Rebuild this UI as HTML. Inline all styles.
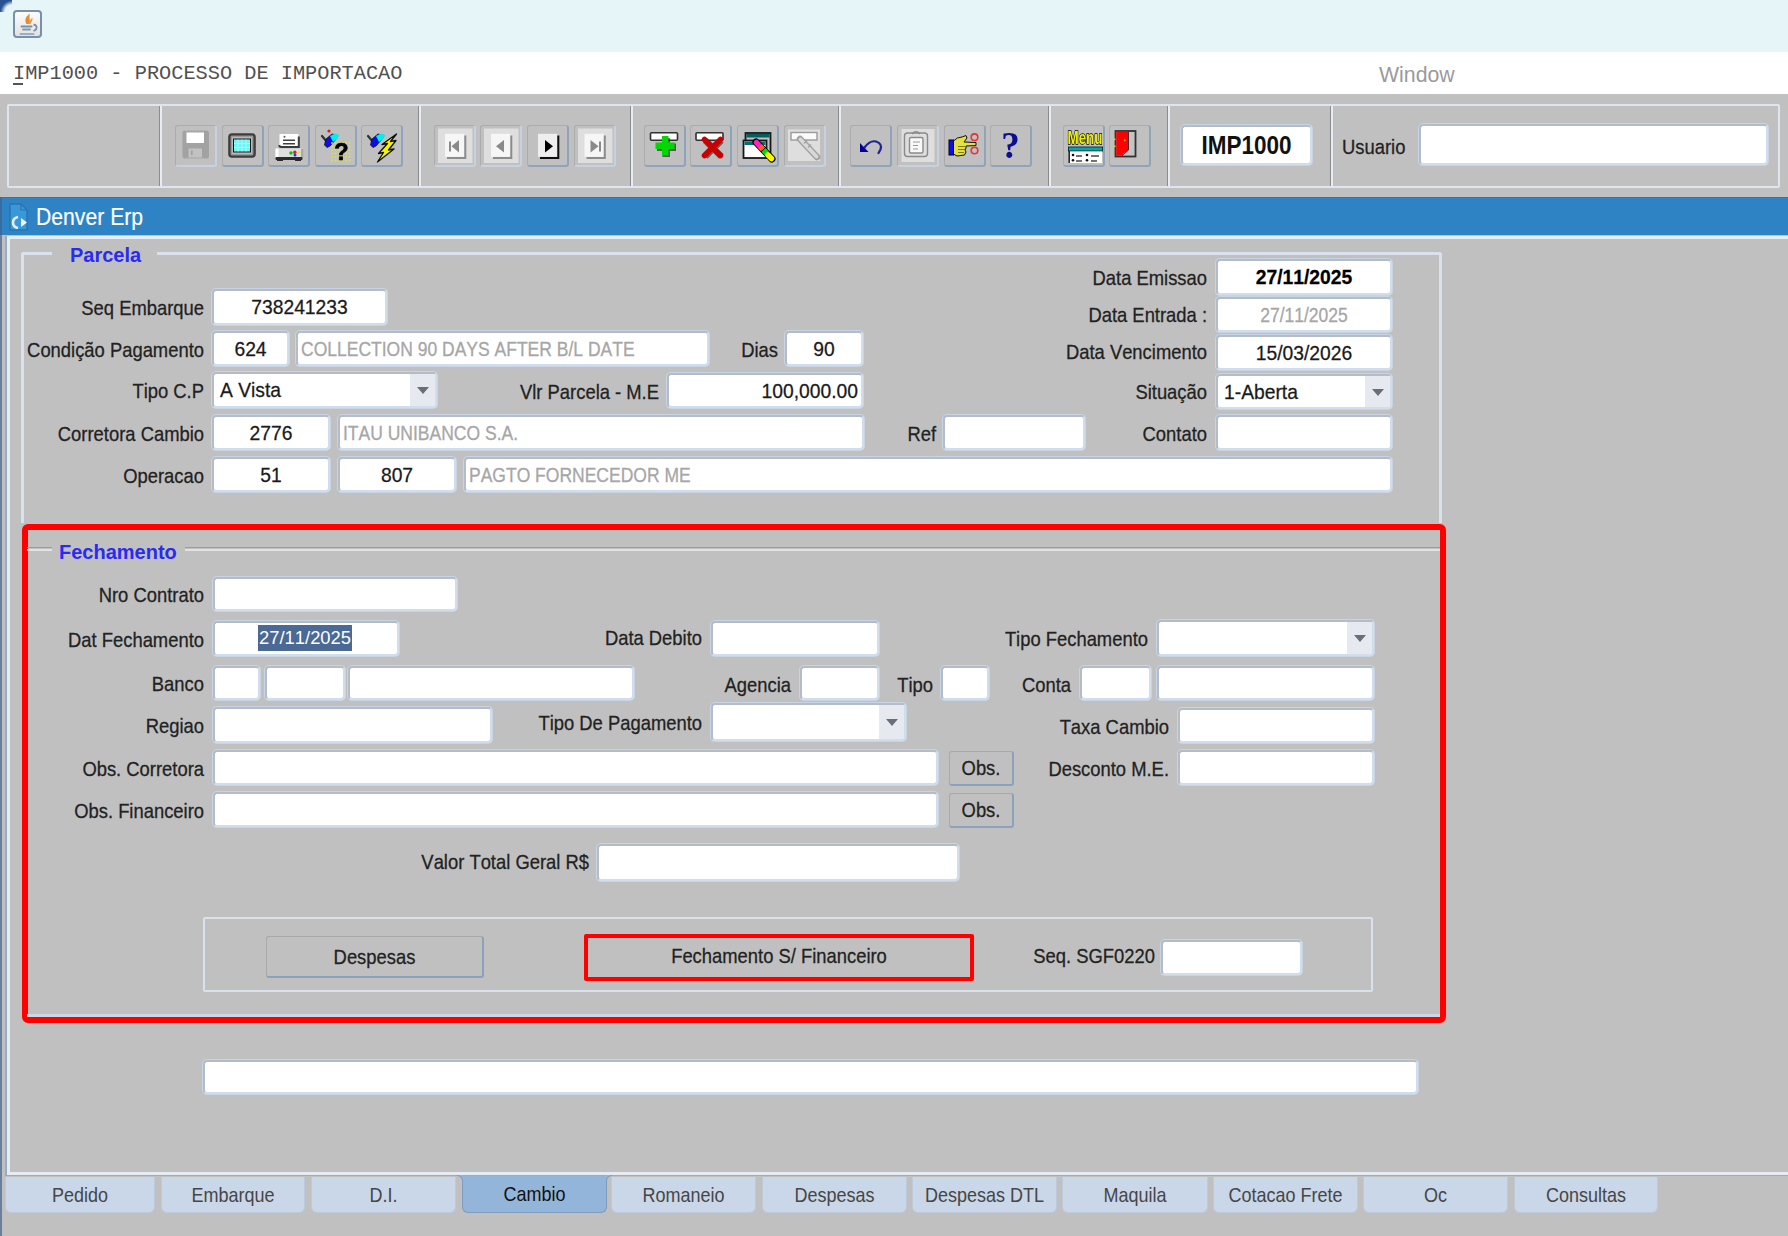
<!DOCTYPE html><html><head><meta charset="utf-8"><style>
*{box-sizing:border-box;margin:0;padding:0}
html,body{width:1788px;height:1236px;overflow:hidden;background:#c0c0c0;font-family:"Liberation Sans",sans-serif;position:relative}
.a{position:absolute}
.f{position:absolute;background:#fff;border:2px solid;border-color:#b3bcc8 #d2ddec #d2ddec #b3bcc8;border-radius:4px;box-shadow:0 0 0 1px #c8d4e4;font-size:19.3px;font-kerning:none;color:#1a1a1a;white-space:nowrap;overflow:hidden}
.f.g{color:#a6a6a6;font-size:17.5px}
.f.g .t{transform:translateY(1.2px) scaleY(1.12)}
.f.b{font-weight:bold;color:#000}
.cb{position:absolute;right:0;top:0;bottom:0;background:#e6eaf0}
.cb i{position:absolute;left:50%;top:50%;margin-left:-6px;margin-top:-3px;border-left:6px solid transparent;border-right:6px solid transparent;border-top:7px solid #6a6e78}
.l{position:absolute;font-size:18.4px;color:#222;white-space:nowrap}
.t{display:inline-block;transform:translateY(1.8px) scaleY(1.09);-webkit-text-stroke:0.25px currentColor;font-kerning:none}
.f .t{transform:translateY(0.5px) scaleY(1.05)}
.gt{position:absolute;font-size:20px;font-weight:bold;color:#2a2af5;white-space:nowrap}
.btn{position:absolute;border:1px solid #a9a9a9;border-right:2px solid #8aa2bc;border-bottom:2px solid #8aa2bc;border-radius:3px;text-align:center;font-size:18.4px;color:#222}
.tb{position:absolute;top:125px;height:42px;border:1px solid #acacac;border-right:2px solid #8ea4bc;border-bottom:2px solid #8ea4bc;border-radius:3px}
.tb.d{border-right-color:#c4d2e2;border-bottom-color:#c4d2e2}
.tab{position:absolute;top:1177px;height:36px;background:#c9d7e8;border-radius:0 0 6px 6px;border:1px solid #bccadc;border-top:none;text-align:center;font-size:18px;line-height:34px;color:#464646}
.tab .t{-webkit-text-stroke:0}
.tab.s{background:#93b5d9;border-color:#7e9cc0;color:#111;top:1176px;height:37px;line-height:35px}
</style></head><body><div style="position:absolute;left:0px;top:0px;width:1788px;height:52px;background:#e6f5f7"></div>
<div style="position:absolute;left:0px;top:52px;width:1788px;height:42px;background:#fff"></div>
<div style="position:absolute;left:0px;top:0px;width:12px;height:12px;background:radial-gradient(circle at 12px 12px,#e6f5f7 7px,#2a5290 11.5px)"></div>
<div class="a" style="left:13px;top:58px;font-family:'Liberation Mono',monospace;font-size:20.3px;line-height:32px;color:#505050;white-space:nowrap">IMP1000 - PROCESSO DE IMPORTACAO</div>
<div style="position:absolute;left:13px;top:83px;width:10px;height:2px;background:#555"></div>
<div class="a" style="left:1379px;top:59px;font-size:21.3px;line-height:32px;color:#9a9a9a">Window</div>
<div class="a" style="left:13px;top:10px;width:29px;height:28px;border:2px solid #7a90a8;border-radius:4px;background:linear-gradient(#fcfcfc,#e2e2e2)"></div>
<svg class="a" style="left:0;top:0" width="60" height="50" viewBox="0 0 60 50"><g filter="url(#bj)"><path d="M26.5 24 C24 20 26 16 30 13.5 C28.5 17 31 19 29 24 Z" fill="#e88a30"/><path d="M29 24 C28 21 31 19.5 32.5 17.5 C33 20.5 31 22 30.5 24 Z" fill="#f09a40"/><rect x="20.5" y="25.5" width="12" height="2" rx="1" fill="#7890a8"/><rect x="22" y="28.5" width="9" height="2" rx="1" fill="#8098b0"/><path d="M33.5 24.5 Q38 25.5 36 29.5 L33.5 31" fill="none" stroke="#7890a8" stroke-width="1.8"/><rect x="19.5" y="33" width="15" height="2" rx="1" fill="#98aec4"/></g><defs><filter id="bj"><feGaussianBlur stdDeviation="0.4"/></filter></defs></svg>
<div style="position:absolute;left:7px;top:104px;width:1773px;height:84px;border:2px solid #dde6f0;border-radius:2px"></div>
<div style="position:absolute;left:159px;top:106px;width:1px;height:80px;background:#8c8c8c"></div>
<div style="position:absolute;left:160px;top:106px;width:2px;height:80px;background:#e6ecf2"></div>
<div style="position:absolute;left:418px;top:106px;width:1px;height:80px;background:#8c8c8c"></div>
<div style="position:absolute;left:419px;top:106px;width:2px;height:80px;background:#e6ecf2"></div>
<div style="position:absolute;left:630px;top:106px;width:1px;height:80px;background:#8c8c8c"></div>
<div style="position:absolute;left:631px;top:106px;width:2px;height:80px;background:#e6ecf2"></div>
<div style="position:absolute;left:838px;top:106px;width:1px;height:80px;background:#8c8c8c"></div>
<div style="position:absolute;left:839px;top:106px;width:2px;height:80px;background:#e6ecf2"></div>
<div style="position:absolute;left:1048px;top:106px;width:1px;height:80px;background:#8c8c8c"></div>
<div style="position:absolute;left:1049px;top:106px;width:2px;height:80px;background:#e6ecf2"></div>
<div style="position:absolute;left:1167px;top:106px;width:1px;height:80px;background:#8c8c8c"></div>
<div style="position:absolute;left:1168px;top:106px;width:2px;height:80px;background:#e6ecf2"></div>
<div style="position:absolute;left:1330px;top:106px;width:1px;height:80px;background:#8c8c8c"></div>
<div style="position:absolute;left:1331px;top:106px;width:2px;height:80px;background:#e6ecf2"></div>
<div class="tb d" style="left:175px;width:42px"></div>
<div class="tb" style="left:222px;width:42px"></div>
<div class="tb" style="left:268px;width:42px"></div>
<div class="tb" style="left:315px;width:42px"></div>
<div class="tb" style="left:361px;width:42px"></div>
<div class="tb d" style="left:434px;width:42px"></div>
<div class="tb d" style="left:480px;width:42px"></div>
<div class="tb" style="left:527px;width:42px"></div>
<div class="tb d" style="left:574px;width:42px"></div>
<div class="tb" style="left:644px;width:42px"></div>
<div class="tb" style="left:690px;width:42px"></div>
<div class="tb" style="left:737px;width:42px"></div>
<div class="tb d" style="left:784px;width:42px"></div>
<div class="tb" style="left:850px;width:42px"></div>
<div class="tb d" style="left:897px;width:42px"></div>
<div class="tb" style="left:944px;width:42px"></div>
<div class="tb" style="left:990px;width:42px"></div>
<div class="tb" style="left:1063px;width:42px"></div>
<div class="tb" style="left:1109px;width:42px"></div>
<svg class="a" style="left:0;top:0" width="1788" height="200" viewBox="0 0 1788 200"><g filter="url(#bl)"><rect x="438" y="128.5" width="34.5" height="34.5" fill="#dedede"/><rect x="484" y="128.5" width="34.5" height="34.5" fill="#dedede"/><rect x="578" y="128.5" width="34.5" height="34.5" fill="#dedede"/><rect x="788" y="129.5" width="32" height="31.5" fill="#dedede"/><rect x="901.5" y="129" width="33.0" height="33" fill="#dedede"/><rect x="182.5" y="130.5" width="26.5" height="28" rx="2.5" fill="#a2a2a2"/><rect x="186.5" y="132.5" width="17.5" height="10.5" fill="#fff"/><rect x="188.5" y="148.5" width="13.5" height="9" fill="#c2c2c2"/><rect x="191" y="150.5" width="1.6" height="4.5" fill="#a0a0a0"/><path d="M186 131 h18 M186 158.3 h18" stroke="#c0c0c0" stroke-width="0.8" stroke-dasharray="1.6 1.6"/><rect x="229.5" y="134.5" width="25" height="22" rx="2.5" fill="none" stroke="#3c3c3c" stroke-width="2.6"/><rect x="231.5" y="136.5" width="21" height="18" fill="none" stroke="#9a9a9a" stroke-width="1.4"/><rect x="233" y="138.5" width="18" height="14" fill="#101818"/><rect x="234" y="139.5" width="16" height="12" fill="#70f4f4"/><path d="M234 143.5h16M234 147.5h16M238 139.5v12M242 139.5v12M246 139.5v12" stroke="#b8fcfc" stroke-width="0.8"/><rect x="279.5" y="134" width="19" height="12.5" fill="#fff"/><path d="M298.8 136.5 v10.5 h-17.5 a2 2 0 0 1 -2 -2" fill="none" stroke="#3a3a3a" stroke-width="2"/><path d="M283 140.3h12M283 143.8h12" stroke="#404040" stroke-width="1.5"/><circle cx="284.5" cy="136.8" r="1" fill="#555"/><rect x="275.5" y="148.5" width="28" height="9" rx="1.5" fill="#dedede"/><rect x="275.5" y="148.5" width="3" height="9" fill="#fff"/><rect x="301" y="149" width="2.5" height="8.5" fill="#a8a8a8"/><circle cx="291" cy="153" r="1.8" fill="#10c010"/><circle cx="294.8" cy="152.3" r="1.7" fill="#e02020"/><circle cx="295" cy="155" r="1.5" fill="#3030e0"/><circle cx="299" cy="152.5" r="1.6" fill="#e8e840"/><rect x="275.5" y="157" width="27" height="3" rx="1" fill="#2c2c2c"/><rect x="277" y="159" width="6" height="2" fill="#2c2c2c"/><rect x="295" y="159" width="6" height="2" fill="#2c2c2c"/><g transform="translate(0,0)"><path d="M322 136 L327 142" stroke="#303030" stroke-width="2.2" stroke-linecap="round"/><path d="M326 139 L332 134 L338 135.5 L337 138 L330 146 L327 147.5 L324.5 145 Z" fill="#1010e8" stroke="#101010" stroke-width="0.8"/><path d="M330 136 L335 133.5 L339 135 L337.5 138.5 L333 142 Z" fill="#00f0f0"/></g><circle cx="329" cy="131" r="1.6" fill="#d02020"/><circle cx="332" cy="143" r="0.9" fill="#e0e040"/><circle cx="335.5" cy="143" r="0.9" fill="#e0e040"/><circle cx="339" cy="143" r="0.9" fill="#e0e040"/><circle cx="342.5" cy="143" r="0.9" fill="#e0e040"/><circle cx="346" cy="143" r="0.9" fill="#e0e040"/><circle cx="349.5" cy="143" r="0.9" fill="#e0e040"/><circle cx="332" cy="146.5" r="0.9" fill="#e0e040"/><circle cx="335.5" cy="146.5" r="0.9" fill="#e0e040"/><circle cx="339" cy="146.5" r="0.9" fill="#e0e040"/><circle cx="342.5" cy="146.5" r="0.9" fill="#e0e040"/><circle cx="346" cy="146.5" r="0.9" fill="#e0e040"/><circle cx="349.5" cy="146.5" r="0.9" fill="#e0e040"/><circle cx="332" cy="150" r="0.9" fill="#e0e040"/><circle cx="335.5" cy="150" r="0.9" fill="#e0e040"/><circle cx="339" cy="150" r="0.9" fill="#e0e040"/><circle cx="342.5" cy="150" r="0.9" fill="#e0e040"/><circle cx="346" cy="150" r="0.9" fill="#e0e040"/><circle cx="349.5" cy="150" r="0.9" fill="#e0e040"/><circle cx="332" cy="153.5" r="0.9" fill="#e0e040"/><circle cx="335.5" cy="153.5" r="0.9" fill="#e0e040"/><circle cx="339" cy="153.5" r="0.9" fill="#e0e040"/><circle cx="342.5" cy="153.5" r="0.9" fill="#e0e040"/><circle cx="346" cy="153.5" r="0.9" fill="#e0e040"/><circle cx="349.5" cy="153.5" r="0.9" fill="#e0e040"/><circle cx="332" cy="157" r="0.9" fill="#e0e040"/><circle cx="335.5" cy="157" r="0.9" fill="#e0e040"/><circle cx="339" cy="157" r="0.9" fill="#e0e040"/><circle cx="342.5" cy="157" r="0.9" fill="#e0e040"/><circle cx="346" cy="157" r="0.9" fill="#e0e040"/><circle cx="349.5" cy="157" r="0.9" fill="#e0e040"/><circle cx="332" cy="160.5" r="0.9" fill="#e0e040"/><circle cx="335.5" cy="160.5" r="0.9" fill="#e0e040"/><circle cx="339" cy="160.5" r="0.9" fill="#e0e040"/><circle cx="342.5" cy="160.5" r="0.9" fill="#e0e040"/><circle cx="346" cy="160.5" r="0.9" fill="#e0e040"/><circle cx="349.5" cy="160.5" r="0.9" fill="#e0e040"/><text x="341.5" y="160" font-family="Liberation Sans" font-weight="bold" font-size="23.5" fill="#000" stroke="#000" stroke-width="0.7" text-anchor="middle">?</text><g transform="translate(46,0)"><path d="M322 136 L327 142" stroke="#303030" stroke-width="2.2" stroke-linecap="round"/><path d="M326 139 L332 134 L338 135.5 L337 138 L330 146 L327 147.5 L324.5 145 Z" fill="#1010e8" stroke="#101010" stroke-width="0.8"/><path d="M330 136 L335 133.5 L339 135 L337.5 138.5 L333 142 Z" fill="#00f0f0"/></g><path d="M396.5 134 L382 144.5 L387.5 143.5 L378.5 153.5 L383.5 152.5 L377.5 162 L394 149 L388.5 150 L396 140.5 L390.5 141.5 Z" fill="#f4f400" stroke="#101010" stroke-width="1.3" stroke-linejoin="round"/><rect x="445" y="133.8" width="19.3" height="23" fill="#f6f6f6"/><path d="M465.3 135.5 V158 H447" fill="none" stroke="#8c8c8c" stroke-width="2"/><rect x="449" y="141.5" width="2" height="10" fill="#8a8a8a"/><path d="M459 140 V152.5 L451.5 146.2 Z" fill="#8a8a8a"/><rect x="491" y="133.8" width="19.3" height="23" fill="#f6f6f6"/><path d="M511.3 135.5 V158 H493" fill="none" stroke="#8c8c8c" stroke-width="2"/><path d="M504 140 V152.5 L496 146.2 Z" fill="#8a8a8a"/><rect x="538" y="133.8" width="19.3" height="23" fill="#eeeeee"/><path d="M558.3 135.5 V158 H540" fill="none" stroke="#101010" stroke-width="2"/><path d="M545 140 V152.5 L553 146.2 Z" fill="#000"/><rect x="584.5" y="133.8" width="19.3" height="23" fill="#f6f6f6"/><path d="M604.8 135.5 V158 H586.5" fill="none" stroke="#8c8c8c" stroke-width="2"/><path d="M590.5 140 V152.5 L598.5 146.2 Z" fill="#8a8a8a"/><rect x="599" y="141.5" width="2" height="10" fill="#8a8a8a"/><rect x="650.5" y="132.7" width="27" height="7.5" rx="1" fill="#fff" stroke="#303030" stroke-width="1.6"/><path d="M665.2 137 V156 M656 146.3 H675" stroke="#000" stroke-width="7.5" stroke-opacity="0.55" transform="translate(1,1)"/><path d="M665.2 136 V155.5 M655.5 145.8 H674.5" stroke="#00d800" stroke-width="6.5"/><rect x="696" y="132.7" width="27" height="7.5" rx="1" fill="#fff" stroke="#303030" stroke-width="1.6"/><path d="M704.5 139.5 L720.5 155.5 M720.5 139.5 L704.5 155.5" stroke="#000" stroke-width="6.5" stroke-opacity="0.5" transform="translate(0.8,1)"/><path d="M704.5 139.5 L720.5 155.5 M720.5 139.5 L704.5 155.5" stroke="#c80000" stroke-width="5.5" stroke-linecap="round"/><rect x="745.5" y="133" width="25" height="22" fill="none" stroke="#181818" stroke-width="1.8"/><rect x="746.5" y="134" width="23" height="3.5" fill="#006060"/><rect x="743.5" y="140.5" width="23" height="17.5" fill="#fff" stroke="#181818" stroke-width="1.8"/><rect x="744.5" y="141.5" width="21" height="3.5" fill="#007070"/><path d="M756 142 L772 159" stroke="#000" stroke-width="7" stroke-linecap="round"/><path d="M756.5 142.5 L761 147.5" stroke="#ff20c0" stroke-width="5.5" stroke-linecap="round"/><path d="M760 146 L763 149.5" stroke="#ff6010" stroke-width="5.5"/><path d="M763.5 150 L767 153.5" stroke="#00e000" stroke-width="5.5"/><path d="M768 155 L771.5 158.5" stroke="#f8f800" stroke-width="5.5" stroke-linecap="round"/><rect x="791" y="132.5" width="26" height="7.5" fill="#fafafa" stroke="#9a9a9a" stroke-width="1.4"/><path d="M800 139 L817 157" stroke="#a0a0a0" stroke-width="6.5" stroke-linecap="round"/><path d="M800.5 139.5 L816.5 156.5" stroke="#d8d8d8" stroke-width="4" stroke-linecap="round"/><path d="M804 143.5 L807 140.5 M808 147.5 L811 144.5" stroke="#a0a0a0" stroke-width="1.2"/><path d="M860 143 V152 H868.5 Z" fill="#000090"/><path d="M864.5 147.5 Q870 140 876 141.5 Q882.5 143.5 880.5 149.5 L878.5 153" fill="none" stroke="#202098" stroke-width="2.2" stroke-linecap="round"/><rect x="904.5" y="133" width="23" height="23.5" rx="3" fill="none" stroke="#8a8a8a" stroke-width="1.4"/><rect x="909.5" y="137.5" width="13.5" height="15.5" rx="1.5" fill="#f8f8f8" stroke="#8a8a8a" stroke-width="1.4"/><path d="M912 134 Q916 129.5 920 134" fill="none" stroke="#8a8a8a" stroke-width="1.4"/><path d="M913 142h7M913 145.5h5M913 149h5" stroke="#9a9a9a" stroke-width="1"/><rect x="949" y="140" width="4.5" height="15" fill="#1010f0" stroke="#000" stroke-width="1"/><path d="M953.5 141 Q957 137 962 137 L966 135.5 L967 138 L964 142 L976 142.5 L976 145.5 L966 146 L966 148 L965 150 L966 152 L964.5 155 L957 156 L953.5 154 Z" fill="#e4e040" stroke="#101010" stroke-width="1"/><path d="M958 146.5h7M958 149.5h7M958 152.5h6" stroke="#606000" stroke-width="0.8"/><circle cx="974.5" cy="137.2" r="3.3" fill="none" stroke="#ee3030" stroke-width="1.6"/><circle cx="974.5" cy="150.5" r="3.3" fill="none" stroke="#ee3030" stroke-width="1.6"/><text x="1010.5" y="158" font-family="Liberation Serif" font-weight="bold" font-size="37" fill="#0c0c90" text-anchor="middle">?</text><rect x="1068.5" y="147" width="34" height="4" fill="#00a8a8" stroke="#103030" stroke-width="1"/><rect x="1069" y="151.5" width="33" height="11.5" fill="#fff"/><path d="M1069.2 151 V163" stroke="#202020" stroke-width="1.5"/><circle cx="1073" cy="155" r="1.3" fill="#111"/><circle cx="1073" cy="160.3" r="1.3" fill="#111"/><circle cx="1087" cy="155" r="1.3" fill="#111"/><circle cx="1087" cy="160.3" r="1.3" fill="#111"/><path d="M1076 156h6M1076 161h6M1091 156h8M1091 161h6" stroke="#444" stroke-width="1.4"/><text x="1067.5" y="143.5" font-family="Liberation Sans" font-weight="bold" font-size="17.5" fill="#f0f000" stroke="#000" stroke-width="1.3" paint-order="stroke" textLength="35" lengthAdjust="spacingAndGlyphs">Menu</text><rect x="1115.5" y="131" width="20" height="25.5" fill="#c4c4c4" stroke="#303030" stroke-width="1.8"/><path d="M1116.3 131.8 H1128.5 V150 L1126 152 L1124 153 L1122 155.7 H1116.3 Z" fill="#ff0000"/><path d="M1128.5 131.8 V150 L1122 155.7" fill="none" stroke="#202020" stroke-width="0.8"/><circle cx="1124.8" cy="140.3" r="1" fill="#ffa000"/><rect x="1114" y="138.5" width="1.5" height="1.5" fill="#e0e000"/><rect x="1114" y="145.5" width="1.5" height="1.5" fill="#e0e000"/></g><defs><filter id="bl" x="-5%" y="-5%" width="110%" height="110%"><feGaussianBlur stdDeviation="0.35"/></filter></defs></svg>
<div class="f b" style="left:1181px;top:125px;width:131px;height:40px;line-height:36px;text-align:center;font-size:22.5px;color:#111"><span class="t" style="transform:translateY(1px) scaleY(1.15);-webkit-text-stroke:0">IMP1000</span></div>
<div class="l" style="left:1342px;top:125px;line-height:42px"><span class="t">Usuario</span></div>
<div class="f" style="left:1419px;top:124px;width:349px;height:41px"></div>
<div style="position:absolute;left:0px;top:197px;width:1788px;height:38px;background:#2e83c5"></div>
<div style="position:absolute;left:0px;top:197px;width:1788px;height:1px;background:#3d72a8"></div>
<div style="position:absolute;left:0px;top:197px;width:2px;height:38px;background:#3a6aa0"></div>
<div class="a" style="left:36px;top:197px;font-size:21.2px;line-height:38px;color:#fff;white-space:nowrap"><span class="t" style="transform:translateY(1.6px) scaleY(1.12);-webkit-text-stroke:0.15px #fff">Denver Erp</span></div>
<svg class="a" style="left:0;top:197px" width="40" height="38" viewBox="0 0 40 38"><g filter="url(#bd)"><path d="M10 7 H21 L27 13 V33 H10 Z" fill="#3a98d8" stroke="#2674b0" stroke-width="1.4"/><path d="M21 7 V13 H27" fill="none" stroke="#2674b0" stroke-width="1.2"/><path d="M18 20 Q13 21 13 25.5 Q13 30 18 31" fill="none" stroke="#e0f0fa" stroke-width="2.6"/><path d="M21 21 L27 25.5 L21 30 Z" fill="#f4fbff"/></g><defs><filter id="bd"><feGaussianBlur stdDeviation="0.4"/></filter></defs></svg>
<div style="position:absolute;left:0px;top:235px;width:2px;height:1001px;background:#6a7f9c"></div>
<div style="position:absolute;left:5px;top:236px;width:2px;height:940px;background:#98aac4"></div>
<div style="position:absolute;left:7px;top:236px;width:3px;height:938px;background:#e6ecf4"></div>
<div style="position:absolute;left:7px;top:236px;width:1781px;height:3px;background:#e6ecf4"></div>
<div style="position:absolute;left:7px;top:1172px;width:1781px;height:3px;background:#e6ecf4"></div>
<div style="position:absolute;left:5px;top:1175px;width:1783px;height:1px;background:#98aac4"></div>
<div style="position:absolute;left:21px;top:252px;width:1421px;height:271px;border:3px solid #d8e1ec;border-bottom:none;border-radius:3px 3px 0 0"></div>
<div style="position:absolute;left:52px;top:248px;width:105px;height:10px;background:#c0c0c0"></div>
<div class="gt" style="left:70px;top:243px;line-height:24px">Parcela</div>
<div class="l " style="right:1584px;top:289px;height:36px;line-height:36px"><span class="t">Seq Embarque</span></div>
<div class="f " style="left:212px;top:289px;width:175px;height:36px;line-height:32px;text-align:center;padding:0 6px"><span class="t">738241233</span></div>
<div class="l " style="right:1584px;top:331px;height:35px;line-height:35px"><span class="t">Condição Pagamento</span></div>
<div class="f " style="left:212px;top:331px;width:77px;height:35px;line-height:31px;text-align:center;padding:0 6px"><span class="t">624</span></div>
<div class="f g" style="left:296px;top:331px;width:413px;height:35px;line-height:31px;text-align:left;padding:0 3px"><span class="t">COLLECTION 90 DAYS AFTER B/L DATE</span></div>
<div class="l " style="right:1010px;top:331px;height:35px;line-height:35px"><span class="t">Dias</span></div>
<div class="f " style="left:785px;top:331px;width:78px;height:35px;line-height:31px;text-align:center;padding:0 6px"><span class="t">90</span></div>
<div class="l " style="right:1584px;top:372px;height:36px;line-height:36px"><span class="t">Tipo C.P</span></div>
<div class="f" style="left:212px;top:372px;width:225px;height:36px;line-height:32px;text-align:left;padding:0 6px"><span class="t">A Vista</span><div class="cb" style="width:25px"><i></i></div></div>
<div class="l " style="right:1129px;top:373px;height:35px;line-height:35px"><span class="t">Vlr Parcela - M.E</span></div>
<div class="f " style="left:667px;top:373px;width:196px;height:35px;line-height:31px;text-align:right;padding:0 3px"><span class="t">100,000.00</span></div>
<div class="l " style="right:1584px;top:415px;height:35px;line-height:35px"><span class="t">Corretora Cambio</span></div>
<div class="f " style="left:212px;top:415px;width:118px;height:35px;line-height:31px;text-align:center;padding:0 6px"><span class="t">2776</span></div>
<div class="f g" style="left:338px;top:415px;width:526px;height:35px;line-height:31px;text-align:left;padding:0 3px"><span class="t">ITAU UNIBANCO S.A.</span></div>
<div class="l " style="right:852px;top:415px;height:35px;line-height:35px"><span class="t">Ref</span></div>
<div class="f " style="left:943px;top:415px;width:142px;height:35px;line-height:31px;text-align:center;padding:0 6px"><span class="t"></span></div>
<div class="l " style="right:581px;top:415px;height:35px;line-height:35px"><span class="t">Contato</span></div>
<div class="f " style="left:1216px;top:415px;width:176px;height:35px;line-height:31px;text-align:center;padding:0 6px"><span class="t"></span></div>
<div class="l " style="right:1584px;top:457px;height:35px;line-height:35px"><span class="t">Operacao</span></div>
<div class="f " style="left:212px;top:457px;width:118px;height:35px;line-height:31px;text-align:center;padding:0 6px"><span class="t">51</span></div>
<div class="f " style="left:338px;top:457px;width:118px;height:35px;line-height:31px;text-align:center;padding:0 6px"><span class="t">807</span></div>
<div class="f g" style="left:464px;top:457px;width:928px;height:35px;line-height:31px;text-align:left;padding:0 3px"><span class="t">PAGTO FORNECEDOR ME</span></div>
<div class="l " style="right:581px;top:259px;height:36px;line-height:36px"><span class="t">Data Emissao</span></div>
<div class="f b" style="left:1216px;top:259px;width:176px;height:36px;line-height:32px;text-align:center;padding:0 6px"><span class="t">27/11/2025</span></div>
<div class="l " style="right:581px;top:296px;height:35px;line-height:35px"><span class="t">Data Entrada :</span></div>
<div class="f g" style="left:1216px;top:297px;width:176px;height:35px;line-height:31px;text-align:center;padding:0 6px"><span class="t">27/11/2025</span></div>
<div class="l " style="right:581px;top:333px;height:35px;line-height:35px"><span class="t">Data Vencimento</span></div>
<div class="f " style="left:1216px;top:335px;width:176px;height:35px;line-height:31px;text-align:center;padding:0 6px"><span class="t">15/03/2026</span></div>
<div class="l " style="right:581px;top:373px;height:35px;line-height:35px"><span class="t">Situação</span></div>
<div class="f" style="left:1216px;top:374px;width:176px;height:35px;line-height:31px;text-align:left;padding:0 6px"><span class="t">1-Aberta</span><div class="cb" style="width:25px"><i></i></div></div>
<div style="position:absolute;left:22px;top:524px;width:1424px;height:499px;border:6px solid #ff0000;border-radius:6px"></div>
<div style="position:absolute;left:27px;top:547px;width:25px;height:1px;background:#9c9c9c"></div>
<div style="position:absolute;left:27px;top:549px;width:25px;height:2px;background:#e2e2e2"></div>
<div style="position:absolute;left:185px;top:547px;width:1255px;height:1px;background:#9c9c9c"></div>
<div style="position:absolute;left:185px;top:549px;width:1255px;height:2px;background:#e2e2e2"></div>
<div style="position:absolute;left:27px;top:1014px;width:1413px;height:3px;background:#ccd8e6"></div>
<div class="gt" style="left:59px;top:540px;line-height:24px">Fechamento</div>
<div class="l " style="right:1584px;top:577px;height:33px;line-height:33px"><span class="t">Nro Contrato</span></div>
<div class="f " style="left:213px;top:577px;width:244px;height:34px;line-height:30px;text-align:center;padding:0 6px"><span class="t"></span></div>
<div class="l " style="right:1584px;top:621px;height:35px;line-height:35px"><span class="t">Dat Fechamento</span></div>
<div class="f" style="left:213px;top:621px;width:186px;height:35px"><span class="a" style="left:43px;top:2px;height:26px;line-height:26px;padding:0 1px;background:#4a6994;color:#fff;font-size:18.4px">27/11/2025</span></div>
<div class="l " style="right:1086px;top:619px;height:35px;line-height:35px"><span class="t">Data Debito</span></div>
<div class="f " style="left:711px;top:621px;width:168px;height:35px;line-height:31px;text-align:center;padding:0 6px"><span class="t"></span></div>
<div class="l " style="right:640px;top:620px;height:36px;line-height:36px"><span class="t">Tipo Fechamento</span></div>
<div class="f" style="left:1157px;top:620px;width:217px;height:36px;line-height:32px;text-align:left;padding:0 6px"><span class="t"></span><div class="cb" style="width:25px"><i></i></div></div>
<div class="l " style="right:1584px;top:666px;height:34px;line-height:34px"><span class="t">Banco</span></div>
<div class="f " style="left:213px;top:666px;width:47px;height:34px;line-height:30px;text-align:center;padding:0 6px"><span class="t"></span></div>
<div class="f " style="left:265px;top:666px;width:80px;height:34px;line-height:30px;text-align:center;padding:0 6px"><span class="t"></span></div>
<div class="f " style="left:348px;top:666px;width:286px;height:34px;line-height:30px;text-align:center;padding:0 6px"><span class="t"></span></div>
<div class="l " style="right:997px;top:667px;height:34px;line-height:34px"><span class="t">Agencia</span></div>
<div class="f " style="left:800px;top:666px;width:79px;height:34px;line-height:30px;text-align:center;padding:0 6px"><span class="t"></span></div>
<div class="l " style="right:855px;top:667px;height:34px;line-height:34px"><span class="t">Tipo</span></div>
<div class="f " style="left:941px;top:666px;width:48px;height:34px;line-height:30px;text-align:center;padding:0 6px"><span class="t"></span></div>
<div class="l " style="right:717px;top:667px;height:34px;line-height:34px"><span class="t">Conta</span></div>
<div class="f " style="left:1080px;top:666px;width:71px;height:34px;line-height:30px;text-align:center;padding:0 6px"><span class="t"></span></div>
<div class="f " style="left:1157px;top:666px;width:217px;height:34px;line-height:30px;text-align:center;padding:0 6px"><span class="t"></span></div>
<div class="l " style="right:1584px;top:707px;height:36px;line-height:36px"><span class="t">Regiao</span></div>
<div class="f " style="left:213px;top:707px;width:279px;height:36px;line-height:32px;text-align:center;padding:0 6px"><span class="t"></span></div>
<div class="l " style="right:1086px;top:703px;height:38px;line-height:38px"><span class="t">Tipo De Pagamento</span></div>
<div class="f" style="left:711px;top:703px;width:195px;height:38px;line-height:34px;text-align:left;padding:0 6px"><span class="t"></span><div class="cb" style="width:25px"><i></i></div></div>
<div class="l " style="right:619px;top:708px;height:35px;line-height:35px"><span class="t">Taxa Cambio</span></div>
<div class="f " style="left:1178px;top:708px;width:196px;height:35px;line-height:31px;text-align:center;padding:0 6px"><span class="t"></span></div>
<div class="l " style="right:1584px;top:750px;height:35px;line-height:35px"><span class="t">Obs. Corretora</span></div>
<div class="f " style="left:213px;top:750px;width:725px;height:35px;line-height:31px;text-align:center;padding:0 6px"><span class="t"></span></div>
<div class="btn" style="left:949px;top:751px;width:65px;height:35px;line-height:29px"><span class="t">Obs.</span></div>
<div class="l " style="right:619px;top:750px;height:35px;line-height:35px"><span class="t">Desconto M.E.</span></div>
<div class="f " style="left:1178px;top:750px;width:196px;height:35px;line-height:31px;text-align:center;padding:0 6px"><span class="t"></span></div>
<div class="l " style="right:1584px;top:792px;height:35px;line-height:35px"><span class="t">Obs. Financeiro</span></div>
<div class="f " style="left:213px;top:792px;width:725px;height:35px;line-height:31px;text-align:center;padding:0 6px"><span class="t"></span></div>
<div class="btn" style="left:949px;top:793px;width:65px;height:35px;line-height:29px"><span class="t">Obs.</span></div>
<div class="l " style="right:1199px;top:842px;height:37px;line-height:37px"><span class="t">Valor Total Geral R$</span></div>
<div class="f " style="left:597px;top:844px;width:362px;height:37px;line-height:33px;text-align:center;padding:0 6px"><span class="t"></span></div>
<div style="position:absolute;left:203px;top:917px;width:1170px;height:75px;border:2px solid #d8e1ec;border-radius:2px"></div>
<div class="btn" style="left:266px;top:936px;width:218px;height:42px;line-height:38px"><span class="t">Despesas</span></div>
<div class="a" style="left:584px;top:934px;width:390px;height:47px;border:4px solid #ff0000;border-radius:2px;text-align:center;font-size:18.4px;line-height:34px;color:#222"><span class="t">Fechamento S/ Financeiro</span></div>
<div class="l " style="right:633px;top:937px;height:35px;line-height:35px"><span class="t">Seq. SGF0220</span></div>
<div class="f " style="left:1161px;top:940px;width:141px;height:35px;line-height:31px;text-align:center;padding:0 6px"><span class="t"></span></div>
<div class="f " style="left:203px;top:1060px;width:1215px;height:34px;line-height:30px;text-align:center;padding:0 6px"><span class="t"></span></div>
<div class="tab" style="left:5px;width:150px"><span class="t">Pedido</span></div>
<div class="tab" style="left:161px;width:144px"><span class="t">Embarque</span></div>
<div class="tab" style="left:311px;width:145px"><span class="t">D.I.</span></div>
<div class="tab s" style="left:462px;width:145px"><span class="t">Cambio</span></div>
<div style="position:absolute;left:457px;top:1175px;width:6px;height:6px;background:radial-gradient(circle at 0 100%,transparent 4.5px,#7e9cc0 5.5px,#93b5d9 6.5px)"></div>
<div style="position:absolute;left:606px;top:1175px;width:6px;height:6px;background:radial-gradient(circle at 100% 100%,transparent 4.5px,#7e9cc0 5.5px,#93b5d9 6.5px)"></div>
<div class="tab" style="left:611px;width:145px"><span class="t">Romaneio</span></div>
<div class="tab" style="left:762px;width:145px"><span class="t">Despesas</span></div>
<div class="tab" style="left:912px;width:145px"><span class="t">Despesas DTL</span></div>
<div class="tab" style="left:1062px;width:146px"><span class="t">Maquila</span></div>
<div class="tab" style="left:1213px;width:145px"><span class="t">Cotacao Frete</span></div>
<div class="tab" style="left:1363px;width:145px"><span class="t">Oc</span></div>
<div class="tab" style="left:1514px;width:144px"><span class="t">Consultas</span></div></body></html>
